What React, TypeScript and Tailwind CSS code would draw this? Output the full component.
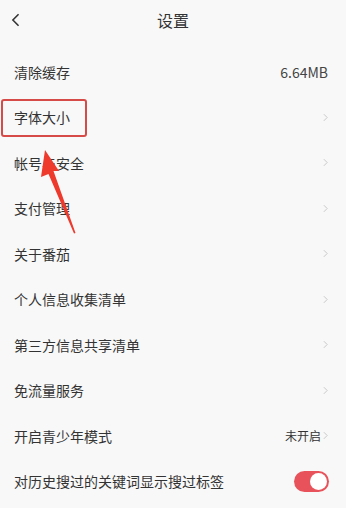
import React from 'react'

const font = { fontFamily: '"Noto Sans CJK SC", "Noto Sans", sans-serif' }

function Chevron() {
  return (
    <svg viewBox="0 0 6 10" className="h-[9px] w-[5px] shrink-0" fill="none" stroke="#c4c4c4" strokeWidth="1.1">
      <path d="M1 1l4 4-4 4" />
    </svg>
  )
}

type Row = { label: string; right?: 'chevron' | 'size' | 'off' | 'toggle' }

const rows: Row[] = [
  { label: '清除缓存', right: 'size' },
  { label: '字体大小', right: 'chevron' },
  { label: '帐号与安全', right: 'chevron' },
  { label: '支付管理', right: 'chevron' },
  { label: '关于番茄', right: 'chevron' },
  { label: '个人信息收集清单', right: 'chevron' },
  { label: '第三方信息共享清单', right: 'chevron' },
  { label: '免流量服务', right: 'chevron' },
  { label: '开启青少年模式', right: 'off' },
  { label: '对历史搜过的关键词显示搜过标签', right: 'toggle' },
]

export default function App() {
  return (
    <div className="relative h-[508px] w-[346px] overflow-hidden bg-[#f8f8f8] text-[#333]" style={font}>
      {/* Header */}
      <div className="relative flex h-[40px] items-center justify-center">
        <svg viewBox="0 0 10 16" className="absolute left-[11px] top-[13px] h-[14px] w-[9px]" fill="none" stroke="#333" strokeWidth="1.8">
          <path d="M8.5 1.5L2 8l6.5 6.5" />
        </svg>
        <span className="text-[16px] leading-none">设置</span>
      </div>
      <div className="h-[9px]" />

      {/* Rows */}
      <ul>
        {rows.map((row) => (
          <li key={row.label} className="flex h-[45.5px] items-center justify-between pl-[14px] pr-[18px]">
            <span className="text-[14px] leading-none">{row.label}</span>
            {row.right === 'size' && <span className="text-[14px] leading-none text-[#444]">6.64MB</span>}
            {row.right === 'chevron' && <Chevron />}
            {row.right === 'off' && (
              <span className="flex items-center gap-[2px] text-[12px] leading-none">
                未开启
                <Chevron />
              </span>
            )}
            {row.right === 'toggle' && (
              <span className="-mr-[1px] flex h-[21px] w-[35px] items-center justify-end rounded-full bg-[#e8535b] pr-[2px]">
                <span className="h-[17px] w-[17px] rounded-full bg-white" />
              </span>
            )}
          </li>
        ))}
      </ul>

      {/* Annotation box */}
      <div className="absolute left-[1px] top-[99px] h-[38px] w-[86px] rounded-[3px] border-[2.5px] border-[#d64b47]" />

      {/* Annotation arrow */}
      <svg className="absolute left-0 top-0 h-[508px] w-[346px]" viewBox="0 0 346 508">
        <path d="M45 150 L59 171 L53.5 171 L75.5 233 L74 233.5 L48.5 174 L41 177 Z" fill="#ee3a2d" />
      </svg>
    </div>
  )
}
